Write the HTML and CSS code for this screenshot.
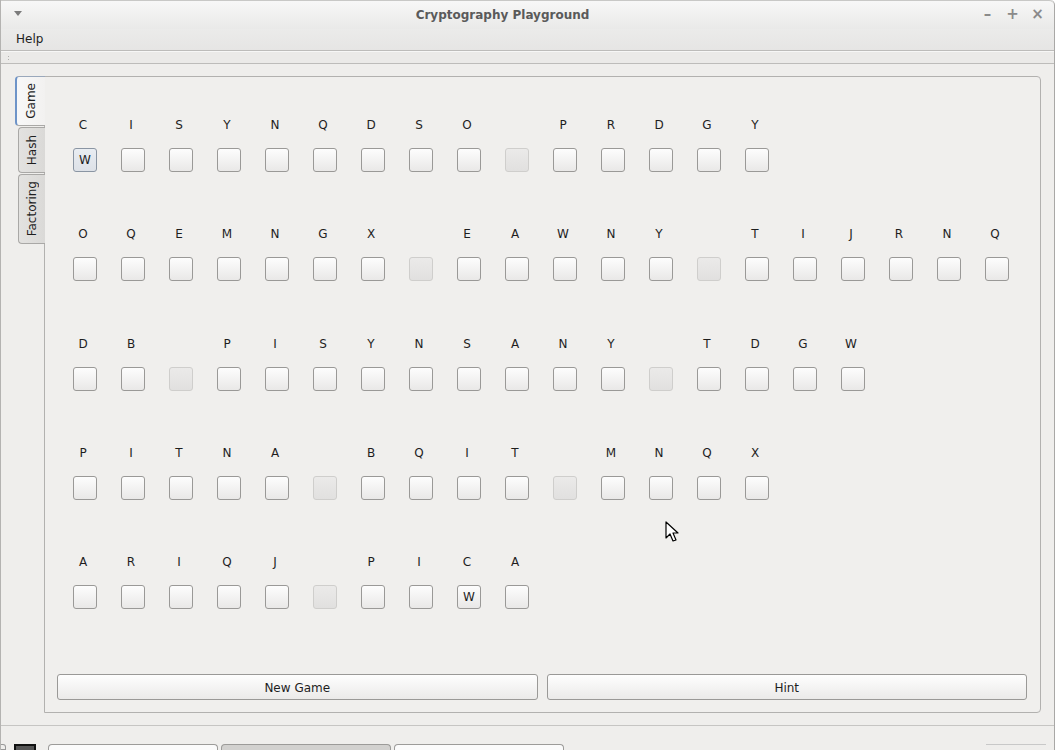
FILE: index.html
```html
<!DOCTYPE html>
<html>
<head>
<meta charset="utf-8">
<link rel="stylesheet" href="styles.css">
</head>
<body>
<div class="window">
  <div class="titlebar">
    <span class="menu-arrow"></span>
    <span class="title">Cryptography Playground</span>
    <span class="controls"><span class="ctl">&#8211;</span><span class="ctl">+</span><span class="ctl">&#215;</span></span>
  </div>
  <div class="menubar"><span class="menu-item">Help</span></div>
  <div class="toolbar"><span class="grip"></span></div>
  <div class="main">
    <div class="tabwidget">
      <div class="tabs">
        <div class="tab selected"><span class="tab-label">Game</span></div>
        <div class="tab hash"><span class="tab-label">Hash</span></div>
        <div class="tab factoring"><span class="tab-label">Factoring</span></div>
      </div>
      <div class="pane">
        <div class="puzzle" id="puzzle"></div>
        <div class="buttons">
          <button class="btn">New Game</button>
          <button class="btn">Hint</button>
        </div>
      </div>
    </div>
  </div>
  <div class="statusbar"></div>
  <div class="taskbar">
    <span class="tb-left"></span>
    <span class="tb-black"></span>
    <span class="tb-task"></span>
    <span class="tb-task active"></span>
    <span class="tb-task"></span>
    <span class="tb-spacer"></span>
    <span class="tb-tray"></span>
  </div>
  <svg class="cursor" width="14" height="22" viewBox="0 0 14 22"><path d="M1 1 L1 17 L5 13 L8 20 L11 19 L8 12 L13 12 Z" fill="#fff" stroke="#000" stroke-width="1.2" stroke-linejoin="round"/></svg>
</div>
<script>
const rows = [
  "CISYNQDSO PRDGY",
  "OQEMNGX EAWNY TIJRNQ",
  "DB PISYNSANY TDGW",
  "PITNA BQIT MNQX",
  "ARIQJ PICA"
];
const filled = {"0,0": ["W", true], "4,8": ["W", false]};
const puzzle = document.getElementById("puzzle");
rows.forEach((r, ri) => {
  const row = document.createElement("div");
  row.className = "prow";
  [...r].forEach((ch, ci) => {
    const cell = document.createElement("div");
    cell.className = "cell";
    const l = document.createElement("div");
    l.className = "letter";
    l.textContent = ch === " " ? "" : ch;
    const b = document.createElement("div");
    b.className = "box";
    if (ch === " ") b.classList.add("disabled");
    const f = filled[ri + "," + ci];
    if (f) { b.textContent = f[0]; if (f[1]) b.classList.add("focus"); }
    cell.appendChild(l); cell.appendChild(b);
    row.appendChild(cell);
  });
  puzzle.appendChild(row);
});
</script>
</body>
</html>
```

FILE: styles.css
```css
* { box-sizing: border-box; }
html, body {
  margin: 0;
  padding: 0;
  width: 1056px;
  height: 750px;
  overflow: hidden;
  background: #ffffff;
  font-family: "DejaVu Sans", sans-serif;
  font-size: 12px;
  color: #1e1e1e;
}
.window {
  position: relative;
  width: 1055px;
  height: 750px;
  background: #efeeec;
  border-left: 1px solid #b4b3b1;
  border-right: 1px solid #a9a8a6;
  border-top-right-radius: 5px;
  display: flex;
  flex-direction: column;
  overflow: hidden;
}
.titlebar {
  height: 29px;
  flex: none;
  display: flex;
  align-items: center;
  position: relative;
  background: linear-gradient(#f7f7f7, #e9e9e8);
  border-top: 1px solid #c8c8c6;
  border-top-right-radius: 5px;
}
.menu-arrow {
  margin-left: 13px;
  width: 0; height: 0;
  border-left: 4px solid transparent;
  border-right: 4px solid transparent;
  border-top: 5px solid #7b7b7b;
  margin-top: -4px;
}
.title {
  flex: 1;
  text-align: center;
  font-weight: bold;
  color: #5a5a5a;
  font-size: 12px;
  margin-top: -1px;
  padding-left: 8px;
}
.controls {
  display: flex;
  margin-right: 4px;
  margin-top: -2px;
}
.ctl {
  width: 25px;
  text-align: center;
  color: #8a8a8a;
  font-weight: bold;
  font-size: 15px;
}
.menubar {
  height: 22px;
  flex: none;
  background: linear-gradient(#ebebea, #e6e5e4);
  border-bottom: 1px solid #bdbcba;
  display: flex;
  align-items: center;
}
.menu-item { padding-left: 15px; margin-top: -1px; }
.toolbar {
  height: 13px;
  flex: none;
  border-top: 1px solid #f7f7f6;
  border-bottom: 1px solid #bdbcba;
  background: #ebeae8;
  display: flex;
  align-items: center;
}
.grip {
  margin-left: 6px;
  width: 4px;
  height: 6px;
  background-image: radial-gradient(circle, #b0afad 0.8px, transparent 1px);
  background-size: 3px 3px;
}
.main {
  flex: none;
  padding: 12px 13px 0 14px;
}
.tabwidget {
  display: flex;
  height: 637px;
}
.tabs {
  width: 30px;
  flex: none;
  display: flex;
  flex-direction: column;
  align-items: flex-end;
  position: relative;
  z-index: 2;
  margin-right: -1px;
}
.tab {
  width: 27px;
  background: linear-gradient(to right, #e3e2e0, #dad9d7);
  border: 1px solid #a9a8a6;
  border-right: none;
  border-radius: 4px 0 0 4px;
  display: flex;
  align-items: center;
  justify-content: center;
  margin-top: 1px;
}
.tab.selected {
  width: 30px;
  height: 50px;
  margin-top: 0;
  background: linear-gradient(to right, #f8f8f8, #f2f1f0);
  border-left: 2px solid #6e94c8;
  border-color: #9aa8bb #a9a8a6 #a9a8a6 #6e94c8;
}
.tab.hash { height: 46px; }
.tab.factoring { height: 70px; margin-top: 1px; }
.tab-label {
  writing-mode: vertical-rl;
  transform: rotate(180deg);
  color: #1e1e1e;
}
.pane {
  flex: 1;
  border: 1px solid #b2b1af;
  border-radius: 0 4px 4px 0;
  background: #f0efed;
  display: flex;
  flex-direction: column;
  padding: 40px 13px 12px 12px;
}
.puzzle {
  display: flex;
  flex-direction: column;
  gap: 54.3px;
  padding-left: 4px;
}
.prow {
  display: flex;
}
.cell {
  width: 48px;
  display: flex;
  flex-direction: column;
  align-items: center;
}
.letter {
  height: 16px;
  line-height: 16px;
  margin-bottom: 15px;
  padding-right: 4px;
  color: #1e1e1e;
}
.box {
  width: 24px;
  height: 24px;
  border: 1px solid #9a9997;
  border-radius: 3px;
  background: linear-gradient(#fdfdfd, #e9e8e7);
  display: flex;
  align-items: center;
  justify-content: center;
  font-size: 12px;
  color: #1e1e1e;
}
.box.disabled {
  border-color: #cfcecc;
  background: linear-gradient(#ebeae9, #e1e0df);
}
.box.focus {
  background: linear-gradient(#e9edf2, #dde1e7);
  border-color: #8a95a3;
}
.buttons {
  margin-top: auto;
  display: flex;
  gap: 9px;
}
.btn {
  flex: 1;
  height: 26px;
  border: 1px solid #9a9997;
  border-radius: 3px;
  background: linear-gradient(#fefefe, #ebeae9);
  font-family: "DejaVu Sans", sans-serif;
  font-size: 12px;
  color: #1e1e1e;
  padding: 2px 0 0 0;
}
.statusbar {
  height: 13px;
  flex: none;
  border-bottom: 1px solid #c6c5c3;
}
.taskbar {
  flex: none;
  margin-top: 18px;
  height: 6px;
  display: flex;
  align-items: flex-start;
}
.tb-left {
  width: 5px; height: 6px;
  border: 1px solid #999; border-left: none;
  border-radius: 0 3px 0 0;
}
.tb-black {
  margin-left: 8px;
  width: 22px; height: 6px;
  border: 2px solid #111; border-bottom: none;
  background: #555;
}
.tb-task {
  margin-left: 12px;
  width: 170px; height: 6px;
  border: 1px solid #9c9b99; border-bottom: none;
  border-radius: 4px 4px 0 0;
  background: #fbfbfb;
}
.tb-task + .tb-task { margin-left: 3px; }
.tb-task.active { background: #d2d1cf; }
.tb-spacer { flex: 1; }
.tb-tray {
  width: 60px; height: 6px;
  margin-right: 8px;
  border-top: 1px solid #c8c8c8;
}
.cursor {
  position: absolute;
  left: 664px;
  top: 521px;
}
```
